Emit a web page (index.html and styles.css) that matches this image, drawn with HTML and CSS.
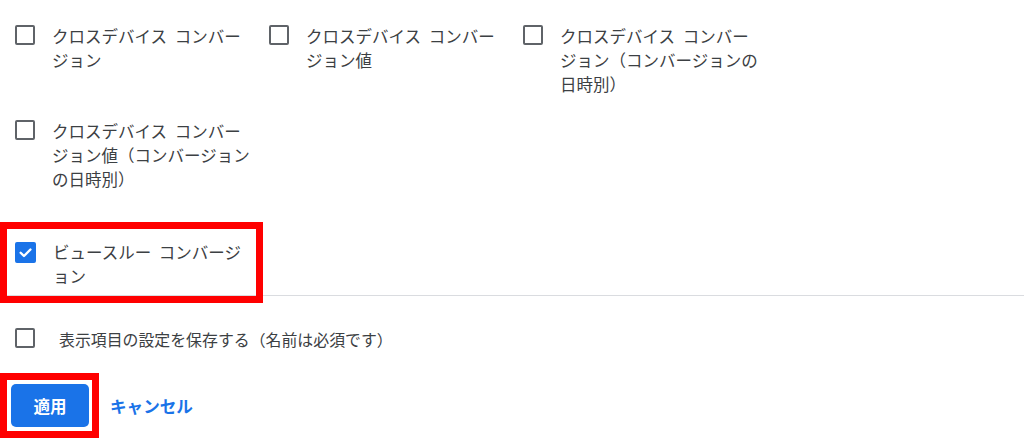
FILE: index.html
```html
<!DOCTYPE html>
<html lang="ja">
<head>
<meta charset="utf-8">
<title>表示項目</title>
<link rel="stylesheet" href="styles.css">
</head>
<body>
<div class="panel">
  <div class="options">
    <label class="option">
      <span class="box"></span>
      <span class="text">クロスデバイス コンバージョン</span>
    </label>
    <label class="option">
      <span class="box"></span>
      <span class="text">クロスデバイス コンバージョン値</span>
    </label>
    <label class="option">
      <span class="box"></span>
      <span class="text">クロスデバイス コンバージョン（コンバージョンの日時別）</span>
    </label>
    <label class="option">
      <span class="box"></span>
      <span class="text">クロスデバイス コンバージョン値（コンバージョンの日時別）</span>
    </label>
  </div>

  <div class="selected-row">
    <label class="option selected">
      <span class="box checked">
        <svg viewBox="0 0 20 20" width="20" height="20"><path d="M4.3 10.3 L8.2 14.1 L15.8 6.5" fill="none" stroke="#fff" stroke-width="2.8" stroke-linecap="round" stroke-linejoin="round"/></svg>
      </span>
      <span class="text">ビュースルー コンバージョン</span>
      <span class="callout callout-option"></span>
    </label>
  </div>

  <hr class="divider">

  <label class="save-row">
    <span class="box"></span>
    <span class="save-text">表示項目の設定を保存する（名前は必須です）</span>
  </label>

  <div class="actions">
    <span class="apply-wrap">
      <button class="apply" type="button">適用</button>
      <span class="callout callout-button"></span>
    </span>
    <button class="cancel" type="button">キャンセル</button>
  </div>
</div>
</body>
</html>
```

FILE: styles.css
```css
html, body {
  margin: 0;
  padding: 0;
  background: #ffffff;
}

body {
  font-family: "Noto Sans CJK JP", "Noto Sans", sans-serif;
  color: #3c4043;
  width: 1024px;
  height: 447px;
  overflow: hidden;
  text-spacing-trim: space-all;
}

.panel {
  padding-top: 24px;
}

.options {
  display: grid;
  grid-template-columns: 254px 254px 254px;
  row-gap: 23px;
  padding-left: 15px;
}

.option {
  display: flex;
  align-items: flex-start;
  gap: 17px;
  width: 242px;
}

.box {
  flex: none;
  box-sizing: border-box;
  width: 20px;
  height: 20px;
  margin-top: 1px;
  border: 2px solid #5f6368;
  border-radius: 2px;
  display: flex;
  align-items: center;
  justify-content: center;
}

.box.checked {
  width: 21px;
  height: 21px;
  margin-top: 2px;
  background: #1a73e8;
  border-color: #1a73e8;
}

.box.checked svg {
  display: block;
  width: 19px;
  height: 19px;
}

.text {
  width: 203px;
  font-size: 16.5px;
  line-height: 24px;
  word-spacing: 4px;
  word-break: break-all;
  line-break: anywhere;
}

.selected-row {
  padding-left: 15px;
  margin-top: 49px;
}

.selected {
  position: relative;
}

.callout {
  position: absolute;
  border: 7px solid #ff0000;
  pointer-events: none;
}

.callout-option {
  left: -15px;
  top: -18px;
  right: -6px;
  bottom: -15px;
}

.divider {
  border: 0;
  border-top: 1px solid #dadce0;
  margin: 7px 0 0 0;
  height: 0;
}

.save-row {
  display: flex;
  align-items: flex-start;
  gap: 24px;
  padding-left: 15px;
  margin-top: 31px;
}

.save-text {
  font-size: 15.9px;
  line-height: 24px;
  margin-top: 1px;
}

.actions {
  display: flex;
  align-items: center;
  gap: 21px;
  padding-left: 11px;
  margin-top: 32px;
}

.apply-wrap {
  position: relative;
  display: block;
}

.apply {
  display: block;
  width: 78px;
  height: 43px;
  border: 0;
  border-radius: 5px;
  background: #1a73e8;
  color: #ffffff;
  font-family: "Noto Sans CJK JP", "Noto Sans", sans-serif;
  font-size: 16.5px;
  font-weight: 700;
  padding: 0;
}

.callout-button {
  left: -11px;
  top: -11px;
  right: -10px;
  bottom: -11px;
}

.cancel {
  border: 0;
  background: none;
  padding: 0;
  color: #1a73e8;
  font-family: "Noto Sans CJK JP", "Noto Sans", sans-serif;
  font-size: 16.6px;
  font-weight: 700;
}
```
